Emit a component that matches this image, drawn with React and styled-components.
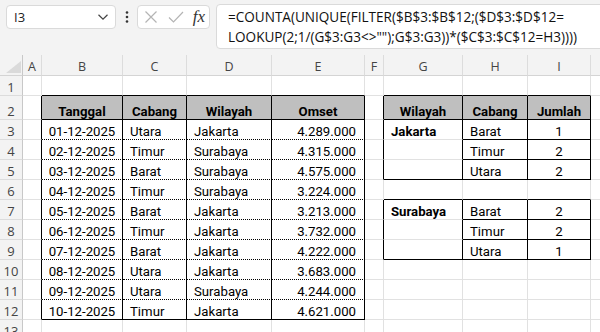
import React from "react";
import styled, { createGlobalStyle } from "styled-components";

const Global = createGlobalStyle`
  html, body { margin: 0; padding: 0; background: #ffffff; overflow: hidden; }
  #root { width: 600px; height: 332px; overflow: hidden; }
`;

const Page = styled.div`
  width: 600px;
  height: 332px;
  display: flex;
  flex-direction: column;
  background: #f3f3f3;
  overflow: hidden;
`;

const FormulaBar = styled.div`
  height: 55px;
  flex: none;
  display: flex;
  align-items: flex-start;
  padding: 5px 0 0 6px;
  box-sizing: border-box;
  font-family: "Open Sans", "Noto Sans", sans-serif;
`;

const Box = styled.div`
  height: 24px;
  box-sizing: border-box;
  background: #ffffff;
  border: 1px solid #dadada;
  border-radius: 4px;
  display: flex;
  align-items: center;
  flex: none;
`;

const NameBox = styled(Box)`
  width: 110px;
  padding: 0 6px 0 7px;
  justify-content: space-between;
  font-size: 13px;
  color: #222;
`;

const Dots = styled.div`
  width: 21px;
  height: 24px;
  display: flex;
  align-items: center;
  justify-content: center;
  flex: none;
`;

const FxBox = styled(Box)`
  width: 73px;
  padding: 0 4px 0 6px;
  justify-content: space-between;
`;

const Fx = styled.span`
  font-family: "Liberation Serif", "DejaVu Serif", serif;
  font-style: italic;
  font-size: 17px;
  color: #333;
  line-height: 1;
  margin-top: -2px;
`;

const FormulaBox = styled.div`
  margin-left: 6px;
  height: 45px;
  width: 400px;
  flex: none;
  box-sizing: border-box;
  background: #ffffff;
  border: 1px solid #dadada;
  border-radius: 4px 0 0 4px;
  padding: 2px 0 0 11px;
  font-size: 13.55px;
  line-height: 20px;
  color: #111;
  white-space: pre;
  margin-top: -1px;
`;

const Sheet = styled.div`
  display: grid;
  grid-template-columns: 23px 19px 81px 64px 85px 93px 19px 79px 65px 63px 60px;
  grid-template-rows: 21px 20px 24px repeat(11, 20px);
  background: #ffffff;
`;

const ColHead = styled.div`
  background: #f3f3f3;
  border-bottom: 1px solid #d4d4d4;
  border-right: 1px solid ${(p) => (p.$corner ? "#c8c8c8" : "#dcdcdc")};
  box-sizing: border-box;
  display: flex;
  align-items: center;
  justify-content: center;
  padding-top: 3px;
  font-family: "Open Sans", "Noto Sans", sans-serif;
  font-size: 12.5px;
  color: #444;
  position: relative;
`;

const RowHead = styled.div`
  background: #f3f3f3;
  border-right: 1px solid #c8c8c8;
  border-bottom: 1px solid #dcdcdc;
  box-sizing: border-box;
  display: flex;
  align-items: flex-end;
  justify-content: center;
  padding-bottom: 0;
  font-family: "Open Sans", "Noto Sans", sans-serif;
  font-size: 13px;
  line-height: 15px;
  color: #444;
`;

const lineOf = (kind) =>
  kind === "solid"
    ? "1px solid #000000"
    : kind === "dotted"
    ? "1px dotted #000000"
    : "1px solid #e1e1e1";

const Cell = styled.div`
  box-sizing: border-box;
  border-right: ${(p) => lineOf(p.$r)};
  border-bottom: ${(p) => lineOf(p.$b)};
  background: ${(p) => (p.$fill ? "#bfbfbf" : "#ffffff")};
  display: flex;
  align-items: flex-end;
  justify-content: ${(p) =>
    p.$align === "center" ? "center" : p.$align === "right" ? "flex-end" : "flex-start"};
  padding: 0 ${(p) => (p.$align === "right" ? "8px" : "0")} 0
    ${(p) => (p.$align === "left" ? "7px" : "0")};
  font-family: Roboto, "Liberation Sans", sans-serif;
  font-size: 13.2px;
  line-height: 15px;
  font-weight: ${(p) => (p.$bold ? 700 : 400)};
  color: #000;
  white-space: nowrap;
  overflow: hidden;
`;

const Corner = styled.svg`
  position: absolute;
  left: 6px;
  top: 6px;
`;

const COLS = ["A", "B", "C", "D", "E", "F", "G", "H", "I", "J"];

const sales = [
  ["01-12-2025", "Utara", "Jakarta", "4.289.000"],
  ["02-12-2025", "Timur", "Surabaya", "4.315.000"],
  ["03-12-2025", "Barat", "Surabaya", "4.575.000"],
  ["04-12-2025", "Timur", "Surabaya", "3.224.000"],
  ["05-12-2025", "Barat", "Jakarta", "3.213.000"],
  ["06-12-2025", "Timur", "Jakarta", "3.732.000"],
  ["07-12-2025", "Barat", "Jakarta", "4.222.000"],
  ["08-12-2025", "Utara", "Jakarta", "3.683.000"],
  ["09-12-2025", "Utara", "Surabaya", "4.244.000"],
  ["10-12-2025", "Timur", "Jakarta", "4.621.000"],
];

// build cell contents and borders; rows 1..13, cols 1..10 (A..J)
function buildSheet() {
  const cells = {};
  const key = (r, c) => `${r},${c}`;
  const set = (r, c, v) => (cells[key(r, c)] = { ...(cells[key(r, c)] || {}), ...v });

  // table 1: B2:E12
  const head1 = ["Tanggal", "Cabang", "Wilayah", "Omset"];
  head1.forEach((t, i) =>
    set(2, 2 + i, { text: t, bold: true, fill: true, align: "center", t: "solid", b: "solid", l: "solid", r: "solid" })
  );
  const aligns1 = ["center", "left", "left", "right"];
  sales.forEach((row, ri) => {
    const r = 3 + ri;
    row.forEach((t, i) =>
      set(r, 2 + i, {
        text: t,
        align: aligns1[i],
        l: "solid",
        r: "solid",
        t: r === 3 ? "solid" : "dotted",
        b: r === 12 ? "solid" : "dotted",
      })
    );
  });

  // table 2 header
  ["Wilayah", "Cabang", "Jumlah"].forEach((t, i) =>
    set(2, 7 + i, { text: t, bold: true, fill: true, align: "center", t: "solid", b: "solid", l: "solid", r: "solid" })
  );

  const block = (r0, region, rows) => {
    rows.forEach(([cab, n], i) => {
      const r = r0 + i;
      const first = i === 0;
      const last = i === rows.length - 1;
      set(r, 7, {
        text: first ? region : "",
        bold: true,
        align: "left",
        l: "solid",
        r: "solid",
        t: first ? "solid" : undefined,
        b: last ? "solid" : undefined,
      });
      set(r, 8, { text: cab, align: "left", l: "solid", r: "solid", t: "solid", b: "solid" });
      set(r, 9, { text: n, align: "center", l: "solid", r: "solid", t: "solid", b: "solid" });
    });
  };
  block(3, "Jakarta", [["Barat", "1"], ["Timur", "2"], ["Utara", "2"]]);
  block(7, "Surabaya", [["Barat", "2"], ["Timur", "2"], ["Utara", "1"]]);

  const rank = (k) => (k === "solid" ? 2 : k === "dotted" ? 1 : 0);
  const pick = (a, b) => (rank(a) >= rank(b) ? a : b);

  const out = [];
  for (let r = 1; r <= 13; r++) {
    const row = [];
    for (let c = 1; c <= 10; c++) {
      const me = cells[key(r, c)] || {};
      const right = cells[key(r, c + 1)] || {};
      const below = cells[key(r + 1, c)] || {};
      row.push({
        ...me,
        rb: pick(me.r, right.l),
        bb: pick(me.b, below.t),
      });
    }
    out.push(row);
  }
  return out;
}

const Chevron = () => (
  <svg width="12" height="8" viewBox="0 0 12 8">
    <path d="M1.5 1.8 L6 6.2 L10.5 1.8" fill="none" stroke="#444" strokeWidth="1.2" />
  </svg>
);

const VDots = () => (
  <svg width="4" height="14" viewBox="0 0 4 14">
    <circle cx="2" cy="2.5" r="1.3" fill="#333" />
    <circle cx="2" cy="7" r="1.3" fill="#333" />
    <circle cx="2" cy="11.5" r="1.3" fill="#333" />
  </svg>
);

const Cross = () => (
  <svg width="14" height="14" viewBox="0 0 14 14">
    <path d="M1.5 1.5 L12.5 12.5 M12.5 1.5 L1.5 12.5" stroke="#b4b4b4" strokeWidth="1.2" fill="none" />
  </svg>
);

const Check = () => (
  <svg width="16" height="14" viewBox="0 0 16 14">
    <path d="M1 7.5 L5.5 12 L15 2" stroke="#b4b4b4" strokeWidth="1.2" fill="none" />
  </svg>
);

const IconsRow = styled.div`
  display: flex;
  align-items: center;
  gap: 10px;
`;

export default function App() {
  const sheet = buildSheet();
  return (
    <>
      <Global />
      <Page>
        <FormulaBar>
          <NameBox>
            <span>I3</span>
            <Chevron />
          </NameBox>
          <Dots>
            <VDots />
          </Dots>
          <FxBox>
            <IconsRow>
              <Cross />
              <Check />
            </IconsRow>
            <Fx>fx</Fx>
          </FxBox>
          <FormulaBox>
            {"=COUNTA(UNIQUE(FILTER($B$3:$B$12;($D$3:$D$12=\nLOOKUP(2;1/(G$3:G3<>\"\");G$3:G3))*($C$3:$C$12=H3))))"}
          </FormulaBox>
        </FormulaBar>
        <Sheet>
          <ColHead $corner>
            <Corner width="15" height="12" viewBox="0 0 15 12">
              <path d="M15 0 L15 12 L0 12 Z" fill="#dadada" />
            </Corner>
          </ColHead>
          {COLS.map((c) => (
            <ColHead key={c}>{c}</ColHead>
          ))}
          {sheet.map((row, ri) => (
            <React.Fragment key={ri}>
              <RowHead>{ri + 1}</RowHead>
              {row.map((cell, ci) => (
                <Cell
                  key={ci}
                  $r={cell.rb}
                  $b={cell.bb}
                  $fill={cell.fill}
                  $bold={cell.bold}
                  $align={cell.align || "left"}
                >
                  {cell.text || ""}
                </Cell>
              ))}
            </React.Fragment>
          ))}
        </Sheet>
      </Page>
    </>
  );
}
